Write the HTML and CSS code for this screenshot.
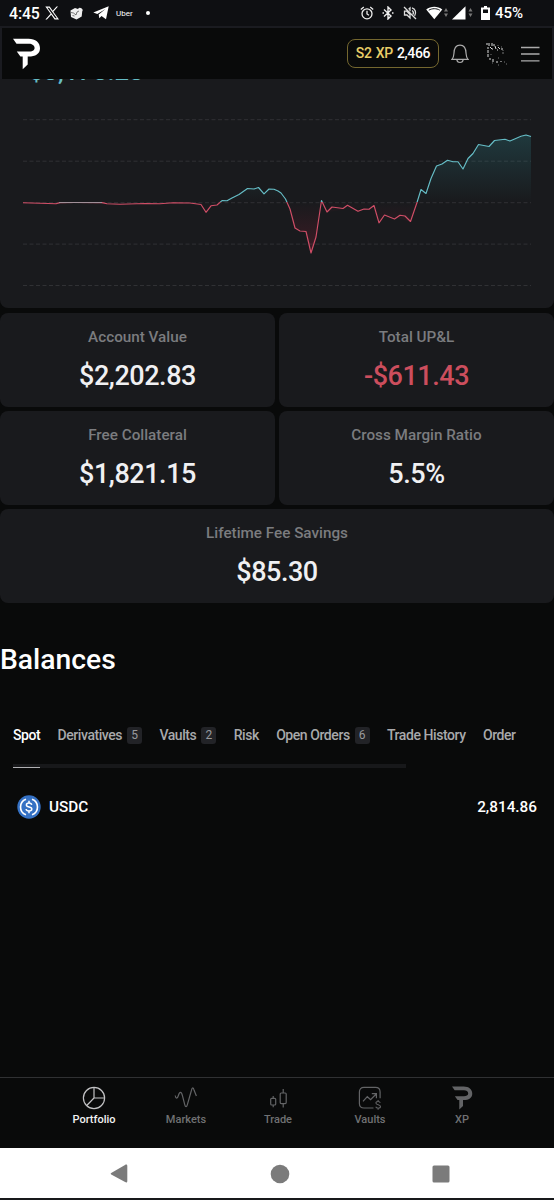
FILE: index.html
```html
<!DOCTYPE html>
<html lang="en">
<head>
<meta charset="utf-8">
<title>Portfolio</title>
<link rel="stylesheet" href="styles.css">
</head>
<body>
<svg class="defs" width="0" height="0">
  <symbol id="logo" viewBox="0 0 28 32"><path d="M0 .8H15.500C22.500.8 27 4.600 27 10.200S22.500 18.600 15.500 18.600H14.700V26.500L9.700 31.200V18.600H7.400L3.800 13.600H16C19 13.600 21.600 12.500 21.600 10S19 5.800 16 5.800H3.500Z"/></symbol>
</svg>
<div class="status">
  <span class="clock">4:45</span>
  <svg class="s-x" width="14" height="14" viewBox="0 0 24 24"><path fill="#fff" fill-rule="evenodd" d="M.5 1H8l5.200 7.200L19.800 1h2.500l-8 8.800L24 23h-7.500l-5.800-8L3.300 23H.7l8.900-9.700ZM4.200 3l13.300 18h2.900L7.100 3Z"/></svg>
  <svg class="s-cube" width="13" height="13" viewBox="0 0 13 13"><path fill="#eee" d="M.5 3.500 5 1l3 1a2.400 2.400 0 1 1 4.200 2.600l-.5 5L6.500 12.500 1 10Z"/><path d="m1 5.500 2.500.5 2.500 2 1-3 2-1M2.500 8.500l2 .5" stroke="#444" fill="none" stroke-width=".7"/></svg>
  <svg class="s-tg" width="16" height="14" viewBox="0 0 16 14"><path fill="#fff" d="M.3 6.500 15.700.3 13 13.300 8.500 10 6.300 12.300 5.700 8.500 12.500 3 4.300 8Z"/></svg>
  <span class="uber">Uber</span>
  <span class="dot"></span>
  <svg class="s-alarm" width="14" height="14" viewBox="0 0 14 14" fill="none" stroke="#eee" stroke-width="1.300"><circle cx="7" cy="7.800" r="5"/><path d="M7 4.800V8l2 1.200M.8 3.500l3-2.500M13.200 3.500l-3-2.500"/></svg>
  <svg class="s-bt" width="12" height="14" viewBox="0 0 12 14" fill="none" stroke="#eee" stroke-width="1.400"><path d="m2 3.500 7 6.500-3 3V1l3 3-7 6.500M.5 7H2m8 0h1.500"/></svg>
  <svg class="s-mute" width="14" height="14" viewBox="0 0 14 14" fill="none" stroke="#ddd" stroke-width="1.300"><path d="m1 1 12 12M1.500 5.200h2.300L7 8.500V12L4 9H1.500ZM7 5.300V2L5.600 3.300M9 4.500c1.300.8 1.700 2.500 1 4M9 1.800c3.300 1 4.700 5 2.600 8"/></svg>
  <svg class="s-wifi" width="23" height="14" viewBox="0 0 23 14"><path fill="#fff" d="M.2 3.600C4.800-.2 11.700-.2 16.300 3.600L8.300 13.300Z"/><path d="M2.800 4.200c3.500-2 7.500-2 11 0" fill="none" stroke="#0e0f12"/><path fill="#777" d="m20 2 2 3.500h-4ZM20 11 18 7.500h4Z"/></svg>
  <svg class="s-cell" width="21" height="14" viewBox="0 0 21 14"><path fill="#fff" d="M0 13.500 13.500.2V13.500Z"/><path fill="#777" d="m18.500 2 2 3.500h-4ZM18.500 11l-2-3.500h4Z"/></svg>
  <svg class="s-bat" width="9" height="14" viewBox="0 0 9 14"><path fill="#fff" fill-rule="evenodd" d="M3 0h3v1.500h3V14H0V1.500h3ZM2 3.500V7h5V3.500Z"/></svg>
  <span class="pct">45%</span>
</div>
<header class="header">
  <svg class="brand" width="28" height="32"><use href="#logo"/></svg>
  <div class="xp"><span class="xp-name">S2 XP</span> <span>2,466</span></div>
  <svg class="bell" width="18" height="20" viewBox="0 0 18 20" fill="none" stroke="#aaa" stroke-width="1.200"><path d="M1 15.300c1.600-1.800 1.800-3 1.900-5.500C3 4.500 5 1.200 9 1.200s6 3.300 6.100 8.600c.1 2.500.3 3.700 1.900 5.500ZM5.800 15.500c.3 4 6.100 4 6.400 0"/></svg>
  <svg class="avatar" width="24" height="26" viewBox="0 0 24 26" fill="none" stroke="#ddd"><path d="M1 3h2m1-1v3m3-3v3m2-2v2M2 7h2m1-1 2 2m3-3 1 3m2-2 2 2M3 9v3m4-4h1m4 1h1m3-1h2M3 13v3m2 1v2m3-1v3m4-1v2m4-2v1"/><path d="M13 4v1m3 1h1m1 3v1M6 13v1m1 8h1m5-5h1m5 4h1m1 2h1M13 24h1M17 12h2" stroke="#777"/></svg>
  <svg class="menu" width="19" height="16" viewBox="0 0 19 16" stroke="#aaa" stroke-width="1.300"><path d="M0 1.500h18.500M0 8h18.500M0 14.800h18.500"/></svg>
</header>
<main class="page">
  <section class="card chart-card">
    <div class="pnl">$3,178.28</div>
    <svg class="chart" width="554" height="220" viewBox="0 88 554 220">
      <defs>
        <linearGradient id="line" gradientUnits="userSpaceOnUse" x1="0" y1="102.500" x2="0" y2="302.500"><stop offset=".5" stop-color="#65bdc6"/><stop offset=".5" stop-color="#d04d66"/></linearGradient>
        <linearGradient id="area" gradientUnits="userSpaceOnUse" x1="0" y1="135" x2="0" y2="253"><stop offset="0" stop-color="#36a6b0" stop-opacity=".22"/><stop offset=".57" stop-color="#36a6b0" stop-opacity="0"/><stop offset=".57" stop-color="#c02040" stop-opacity="0"/><stop offset="1" stop-color="#c02040" stop-opacity=".22"/></linearGradient>
      </defs>
      <path stroke="#303134" stroke-dasharray="4 2.500" d="M23 119.700H531M23 161.200H531M23 202.700H531M23 244.100H531M23 285.500H531"/>
      <path fill="url(#area)" d="M23 202.500 201 204.500 206 212.300 211 205.800 217 205 222 200.600 239 194.500 247.500 188.500 258.500 187.500 264 193.800 269 189 274 189.300 285.500 199 290 209 295 228 306 231.500 311 253 316 237 321.500 200.500 327 212 374 205.500 379 222.800 384.500 215 410.500 221.500 417 202.500 421 189.500 426 193.500 431 178.500 436.500 166 447.500 160.300 458 161.700 463 169 468 158.500 473 153.500 478.500 144.500 489 146.500 494.500 140.500 505 139.300 510 141 526 135 531 136.500V202.500Z"/>
      <path fill="none" stroke="url(#line)" stroke-width="1.150" stroke-linejoin="round" d="M23 202.700 40 203.300 56 203.700 60 202.600 75 202.500 102 202.600 107 203.800 120 204.300 145 203.500 160 203.800 173 202.800 190 203 201 204.500 206 212.300 211 205.800 217 205 222 200.600 227 200.800 232 198 239 194.500 247.500 188.500 254 189 258.500 187.500 264 193.800 269 189 274 189.300 278 191 281 193 285.500 199 290 209 295 228 300 231 306 231.500 311 253 316 237 321.500 200.500 327 212 332 207 343 208.500 347.500 205.300 358 211.300 364 209 369 209.300 374 205.500 379 222.800 384.500 215 394.500 219 400 215.300 405 216 410.500 221.500 417 202.500 421 189.500 426 193.500 431 178.500 436.500 166 442 164 447.500 160.300 453 161.700 458 161.700 463 169 468 158.500 473 153.500 478.500 144.500 489 146.500 494.500 140.500 505 139.300 510 141 521 136.300 526 135 531 136.500"/>
      <path stroke="#a08f98" stroke-width="1" d="M59 202.500H102"/>
    </svg>
  </section>
  <section class="stats">
    <div class="card stat"><div class="label">Account Value</div><div class="value">$2,202.83</div></div>
    <div class="card stat"><div class="label">Total UP&amp;L</div><div class="value loss">-$611.43</div></div>
    <div class="card stat"><div class="label">Free Collateral</div><div class="value">$1,821.15</div></div>
    <div class="card stat"><div class="label">Cross Margin Ratio</div><div class="value">5.5%</div></div>
    <div class="card stat wide"><div class="label">Lifetime Fee Savings</div><div class="value">$85.30</div></div>
  </section>
  <h2 class="title">Balances</h2>
  <nav class="tabs">
    <span class="tab active">Spot</span>
    <span class="tab">Derivatives <b class="count">5</b></span>
    <span class="tab">Vaults <b class="count">2</b></span>
    <span class="tab">Risk</span>
    <span class="tab">Open Orders <b class="count">6</b></span>
    <span class="tab">Trade History</span>
    <span class="tab">Order</span>
  </nav>
  <div class="track"><div class="thumb"></div></div>
  <div class="asset">
    <svg width="24" height="24" viewBox="0 0 24 24" fill="none" stroke="#fff"><circle cx="12" cy="12" r="11.700" fill="#3571c4" stroke="none"/><path stroke-width="1.600" d="M9 4.200a8.300 8.300 0 0 0 0 15.600M15 4.200a8.300 8.300 0 0 1 0 15.600"/><path stroke-width="1.500" d="M12 5.700v2.200m0 8.200v2.200M14.700 9.900c-.2-1.200-1.200-1.900-2.700-1.900-1.600 0-2.600.8-2.600 1.900 0 2.800 5.400 1.300 5.400 4.100 0 1.200-1.100 2-2.800 2s-2.700-.8-2.900-2"/></svg>
    <span class="symbol">USDC</span>
    <span class="amount">2,814.86</span>
  </div>
</main>
<nav class="bottom">
  <div class="item on"><svg width="24" height="24" viewBox="0 0 24 24" fill="none" stroke="currentColor" stroke-width="1.200"><circle cx="12" cy="12" r="10.600"/><path d="M12 1.400V12h10.600M12 12l-7.300 7.500"/></svg><span>Portfolio</span></div>
  <div class="item"><svg width="24" height="24" viewBox="0 0 24 24" fill="none" stroke="currentColor" stroke-width="1.200"><path d="M1.200 9.500c.5 3.300 2.200 3.500 3.200 0 1.200-4.300 3-4 4.100.3l2.300 9c.6 2.500 1.800 2.500 2.500 0L17.400 4.500c.8-3.400 2-3.400 2.700-.2L22.400 10"/></svg><span>Markets</span></div>
  <div class="item"><svg width="24" height="24" viewBox="0 0 24 24" fill="none" stroke="currentColor" stroke-width="1.200"><rect x="4.700" y="12.300" width="5" height="6.700" rx="1"/><path d="M7.200 10v2.300m0 6.700v2.300M17.200 3v4m0 10.600v4"/><rect x="14.200" y="7" width="6" height="10.600" rx="1"/></svg><span>Trade</span></div>
  <div class="item"><svg width="24" height="24" viewBox="0 0 24 24" fill="none" stroke="currentColor" stroke-width="1.200"><path d="M15.500 22H6c-3 0-4.600-1.600-4.600-4.600V6C1.400 3 3 1.400 6 1.400h11.500c3 0 4.600 1.600 4.600 4.600v6.300M5 15.300l4.300-4.600 3.300 3 5.600-5.700M13.800 7.700h4.600v4.600"/><path d="M22.300 16.700c-.4-.8-1.200-1.200-2.200-1.200-1.300 0-2.200.7-2.200 1.600 0 2.300 4.600 1.100 4.600 3.400 0 1-.9 1.700-2.300 1.700-1.200 0-2.100-.5-2.500-1.400M20.100 13.900v1.600m0 6.700v1.500" stroke-width="1.100"/></svg><span>Vaults</span></div>
  <div class="item"><svg class="xp-icon" width="21" height="24"><use href="#logo"/></svg><span>XP</span></div>
</nav>
<div class="android">
  <svg width="18" height="20" viewBox="0 0 18 20"><path fill="#7b7b7b" d="M1.200 9 15 .9C16.500.1 17.300.6 17.300 2V17c0 1.400-.8 1.900-2.200 1.100L1.200 10.600Q0 9.800 1.200 9Z"/></svg>
  <svg width="20" height="20"><circle cx="10" cy="10" r="9.300" fill="#7b7b7b"/></svg>
  <svg width="18" height="20"><rect x=".5" y="1.500" width="17" height="17" rx="1.500" fill="#7b7b7b"/></svg>
</div>
</body>
</html>
```
FILE: styles.css
```css
* { box-sizing: border-box; }
body { margin: 0; width: 554px; height: 1200px; overflow: hidden; display: flex; flex-direction: column; background: #090a0a; color: #fff; font-family: Roboto, sans-serif; font-weight: 500; }
svg { display: block; flex: none; }
.defs { position: absolute; }

.status { height: 26px; flex: none; display: flex; align-items: center; padding: 0 0 0 9px; background: #0e0f12; white-space: nowrap; }
.clock { width: 36px; font-size: 15.800px; letter-spacing: -.1px; }
.s-cube { margin-left: 11px; }
.s-tg { margin-left: 10px; }
.uber { width: 18px; margin-left: 7px; font-size: 8px; font-weight: 400; }
.dot { width: 4px; height: 4px; margin-left: 12px; border-radius: 50%; background: #fff; }
.s-alarm { margin-left: 210px; }
.s-bt { margin-left: 8px; }
.s-mute { margin-left: 9px; }
.s-wifi { margin-left: 9px; }
.s-cell { margin-left: 3px; }
.s-bat { margin-left: 8px; }
.pct { margin-left: 5px; font-size: 15px; }

.header { height: 53px; flex: none; display: flex; align-items: center; padding: 0 12px 0 11px; border: solid #1a1b20; border-width: 2px 2px 0; background: #090a0a; position: relative; z-index: 1; }
.brand { fill: #fff; }
.xp { width: 92px; height: 29px; margin-left: auto; border: 1px solid #74672f; border-radius: 8px; line-height: 27px; text-align: center; font-size: 14px; letter-spacing: -.35px; word-spacing: 1px; white-space: nowrap; }
.xp-name { color: #e9ce68; }
.bell { margin-left: 12px; }
.avatar { margin-left: 16px; }
.menu { margin-left: 12px; }

.page { flex: 1; display: flex; flex-direction: column; }
.card { background: #191a1d; border-radius: 8px; }
.chart-card { height: 229px; padding-top: 7px; border-radius: 0 0 8px 8px; }
.pnl { height: 30px; margin: -28px 0 0 29px; line-height: 26px; font-size: 25.600px; color: #65bdc6; }
.stats { display: grid; grid-template-columns: 1fr 1fr; gap: 4px; margin-top: 5px; }
.stat { height: 94px; padding-top: 15px; text-align: center; }
.wide { grid-column: span 2; }
.label { color: #7b7c7f; font-size: 15.250px; line-height: 19px; }
.value { margin-top: 13px; font-size: 27px; line-height: 32px; letter-spacing: -.45px; color: #f0f0f2; }
.loss { color: #cc4e5d; }
.title { margin: 41px 0 0; font-size: 28.300px; line-height: 32px; font-weight: 500; }
.tabs { display: flex; align-items: center; gap: 17.300px; height: 20px; margin-top: 49px; padding-left: 13px; white-space: nowrap; font-size: 14px; letter-spacing: -.43px; color: #a8a9ab; }
.tab { display: flex; align-items: center; gap: 5px; }
.active { color: #fff; }
.count { width: 15px; height: 17px; border-radius: 3px; background: #222327; color: #999a9d; text-align: center; line-height: 17px; font-size: 12px; letter-spacing: 0; font-weight: 400; }
.track { width: 393px; height: 4px; margin: 19px 0 0 13px; background: #17181a; display: flex; align-items: flex-end; }
.thumb { width: 27px; height: 1px; background: #b0b0b3; }
.asset { display: flex; align-items: center; margin-top: 27px; padding: 0 17px; font-size: 15.300px; }
.symbol { margin-left: 8px; }
.amount { margin-left: auto; }

.bottom { height: 71px; flex: none; display: flex; justify-content: center; padding: 8px 0 0 2px; border-top: 1px solid #303133; }
.item { width: 92px; display: flex; flex-direction: column; align-items: center; gap: 3px; color: #707173; font-size: 11px; line-height: 13px; }
.item svg { color: #636466; }
.item.on svg { color: #c2c2c4; }
.on { color: #f2f2f2; }
.xp-icon { fill: #636466; }
.android { height: 52px; flex: none; display: flex; align-items: center; justify-content: center; gap: 142px; padding: 2px 0 0 5px; background: #fff; border-bottom: 2px solid #18191b; }
```
